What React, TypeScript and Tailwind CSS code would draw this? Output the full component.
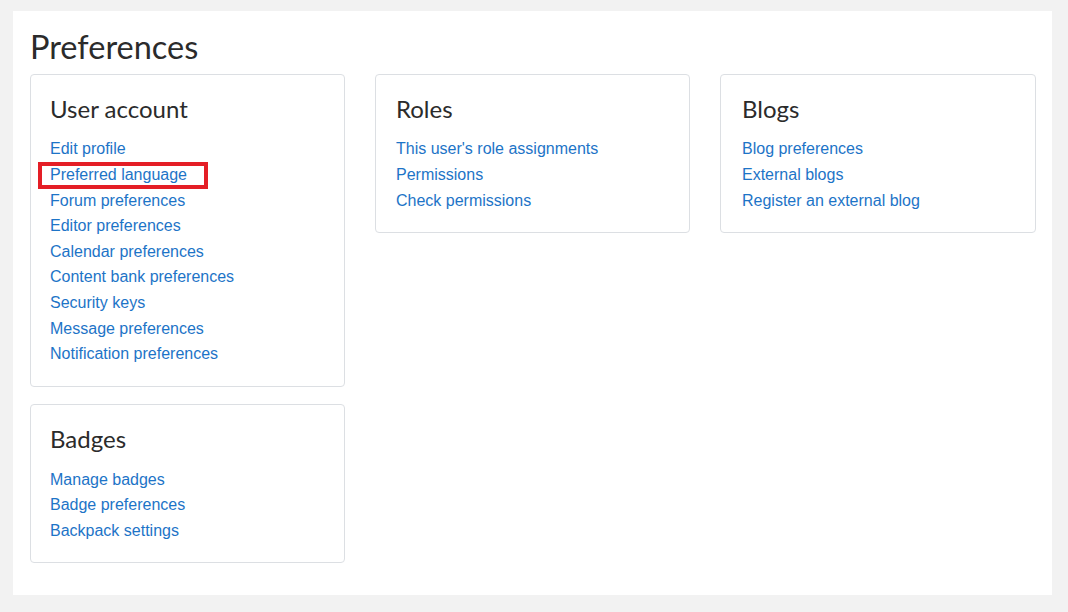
import React from "react";

const linkCls = "text-[#1d74c7] text-[16px] leading-[25.6px] font-['Liberation_Sans',Arial,sans-serif]";

function Card({ title, links, highlight, pad = "pl-5" }: { title: string; links: string[]; highlight?: string; pad?: string }) {
  return (
    <div className={`border border-[#dcdfe3] rounded-[4px] bg-white ${pad} pr-5 pt-5 pb-[19px]`}>
      <h3 className="font-['Lato','Open_Sans',sans-serif] text-[24px] leading-[28.8px] text-[#2b2b2b] mb-[13px]">{title}</h3>
      <ul>
        {links.map((l) => (
          <li key={l} className={linkCls}>
            {l === highlight ? (
              <span className="relative inline-block">
                {l}
                <span className="absolute left-[-12px] right-[-21px] top-[0px] bottom-[-1px] border-[4px] border-[#e41e26]" />
              </span>
            ) : (
              l
            )}
          </li>
        ))}
      </ul>
    </div>
  );
}

export default function App() {
  return (
    <div className="min-h-[612px] bg-[#f2f2f2] pt-[11px] pl-[13px] pr-[16px] pb-[17px]">
      <div className="bg-white h-[584px] pl-[17px] pr-[16px] pt-[16px]">
        <h1 className="font-['Lato','Open_Sans',sans-serif] text-[32.5px] leading-[39.6px] text-[#2b2b2b] mb-[7px]">Preferences</h1>
        <div className="grid grid-cols-[315px_315px_316px] gap-[30px] items-start">
          <div className="flex flex-col gap-[17px]">
            <Card
              title="User account"
              pad="pl-[19px]"
              highlight="Preferred language"
              links={[
                "Edit profile",
                "Preferred language",
                "Forum preferences",
                "Editor preferences",
                "Calendar preferences",
                "Content bank preferences",
                "Security keys",
                "Message preferences",
                "Notification preferences",
              ]}
            />
            <Card title="Badges" pad="pl-[19px]" links={["Manage badges", "Badge preferences", "Backpack settings"]} />
          </div>
          <Card title="Roles" links={["This user's role assignments", "Permissions", "Check permissions"]} />
          <Card title="Blogs" pad="pl-[21px]" links={["Blog preferences", "External blogs", "Register an external blog"]} />
        </div>
      </div>
    </div>
  );
}
